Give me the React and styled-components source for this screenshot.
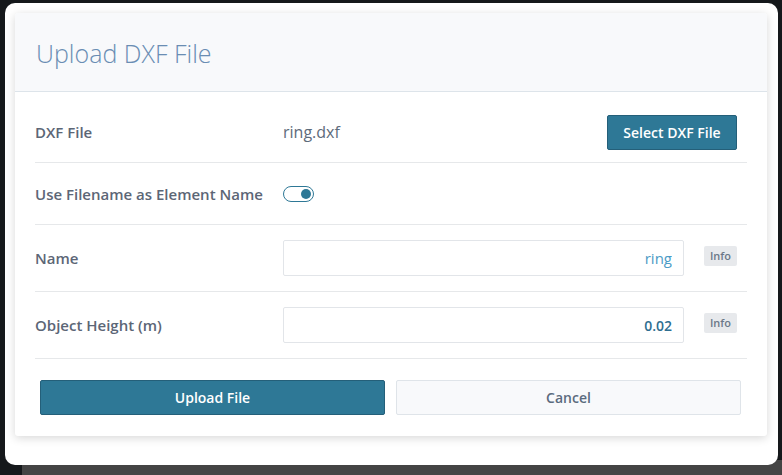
import React from 'react'
import styled, { createGlobalStyle } from 'styled-components'

const GlobalStyle = createGlobalStyle`
  html, body {
    margin: 0;
    padding: 0;
  }
  body {
    width: 782px;
    height: 475px;
    overflow: hidden;
    font-family: "Open Sans", "Noto Sans", sans-serif;
    background:
      linear-gradient(to right, #15181b 0 22px, transparent 22px) bottom / 100% 15px no-repeat,
      linear-gradient(#15181b 0 460px, #444444 460px);
  }
`

const Frame = styled.div`
  box-sizing: border-box;
  margin: 3px 0 0 5px;
  width: 773px;
  height: 462px;
  padding: 10px 11px 29px 10px;
  background: #ffffff;
  border-radius: 10px;
`

const Card = styled.div`
  box-sizing: border-box;
  height: 423px;
  background: #ffffff;
  border-radius: 3px;
  box-shadow: 0 2px 10px rgba(0, 0, 0, 0.16);
  overflow: hidden;
`

const Header = styled.div`
  box-sizing: border-box;
  height: 79px;
  padding-left: 21px;
  display: flex;
  align-items: center;
  background: #f8f9fb;
  border-bottom: 1px solid #dde4ea;
`

const Title = styled.h2`
  margin: 0;
  padding-top: 1px;
  font-size: 25px;
  font-weight: 300;
  color: #6a8db3;
`

const Body = styled.div`
  padding: 10px 20px 0 20px;
`

const Row = styled.div`
  box-sizing: border-box;
  height: ${p => p.h}px;
  display: flex;
  align-items: center;
  border-bottom: 1px solid #e6e8ea;
`

const Label = styled.div`
  width: 248px;
  flex-shrink: 0;
  font-size: 15px;
  font-weight: 600;
  color: #5c6676;
`

const FileName = styled.div`
  flex: 1;
  font-size: 16px;
  color: #5d6b7b;
`

const PrimaryButton = styled.button`
  box-sizing: border-box;
  height: 35px;
  width: ${p => p.w || 'auto'};
  margin-right: ${p => p.mr || 0}px;
  border: 1px solid #245f79;
  border-radius: 2px;
  background: #2e7896;
  color: #ffffff;
  font-family: inherit;
  font-size: 14px;
  font-weight: 600;
  padding: 0;
`

const GhostButton = styled.button`
  box-sizing: border-box;
  height: 35px;
  border: 1px solid #dfe4e9;
  border-radius: 2px;
  background: #f8f9fb;
  color: #5b6b7e;
  font-family: inherit;
  font-size: 14px;
  font-weight: 600;
`

const Toggle = styled.div`
  box-sizing: border-box;
  width: 31px;
  height: 16px;
  border: 1.5px solid #2e7896;
  border-radius: 8px;
  background: #ffffff;
  display: flex;
  align-items: center;
  justify-content: flex-end;
  padding-right: 2px;
`

const Knob = styled.span`
  width: 10px;
  height: 10px;
  border-radius: 50%;
  background: #2e7896;
`

const Input = styled.input`
  box-sizing: border-box;
  width: 401px;
  height: 36px;
  border: 1px solid #e2e5e9;
  border-radius: 2px;
  padding: 0 11px 0 8px;
  text-align: right;
  font-family: inherit;
  font-size: ${p => (p.strong ? 14 : 15)}px;
  font-weight: ${p => (p.strong ? 600 : 400)};
  color: ${p => (p.strong ? '#2f6e90' : '#4b9bc6')};
  outline: none;
  background: #ffffff;
`

const Info = styled.span`
  margin: 0 0 5px 20px;
  width: 33px;
  height: 20px;
  display: flex;
  align-items: center;
  justify-content: center;
  background: #e7e9ec;
  border-radius: 2px;
  font-size: 11px;
  font-weight: 600;
  color: #6b7888;
`

const Spacer = styled.div`
  flex: 1;
`

const Footer = styled.div`
  display: grid;
  grid-template-columns: 1fr 1fr;
  gap: 11px;
  padding: 21px 6px 0 5px;
`

export default function App() {
  return (
    <>
      <GlobalStyle />
      <Frame>
        <Card>
          <Header>
            <Title>Upload DXF File</Title>
          </Header>
          <Body>
            <Row h={61}>
              <Label>DXF File</Label>
              <FileName>ring.dxf</FileName>
              <PrimaryButton w="130px" mr={10}>Select DXF File</PrimaryButton>
            </Row>
            <Row h={62}>
              <Label>Use Filename as Element Name</Label>
              <Toggle>
                <Knob />
              </Toggle>
            </Row>
            <Row h={67}>
              <Label>Name</Label>
              <Input defaultValue="ring" />
              <Info>Info</Info>
              <Spacer />
            </Row>
            <Row h={67}>
              <Label>Object Height (m)</Label>
              <Input strong defaultValue="0.02" />
              <Info>Info</Info>
              <Spacer />
            </Row>
            <Footer>
              <PrimaryButton>Upload File</PrimaryButton>
              <GhostButton>Cancel</GhostButton>
            </Footer>
          </Body>
        </Card>
      </Frame>
    </>
  )
}
